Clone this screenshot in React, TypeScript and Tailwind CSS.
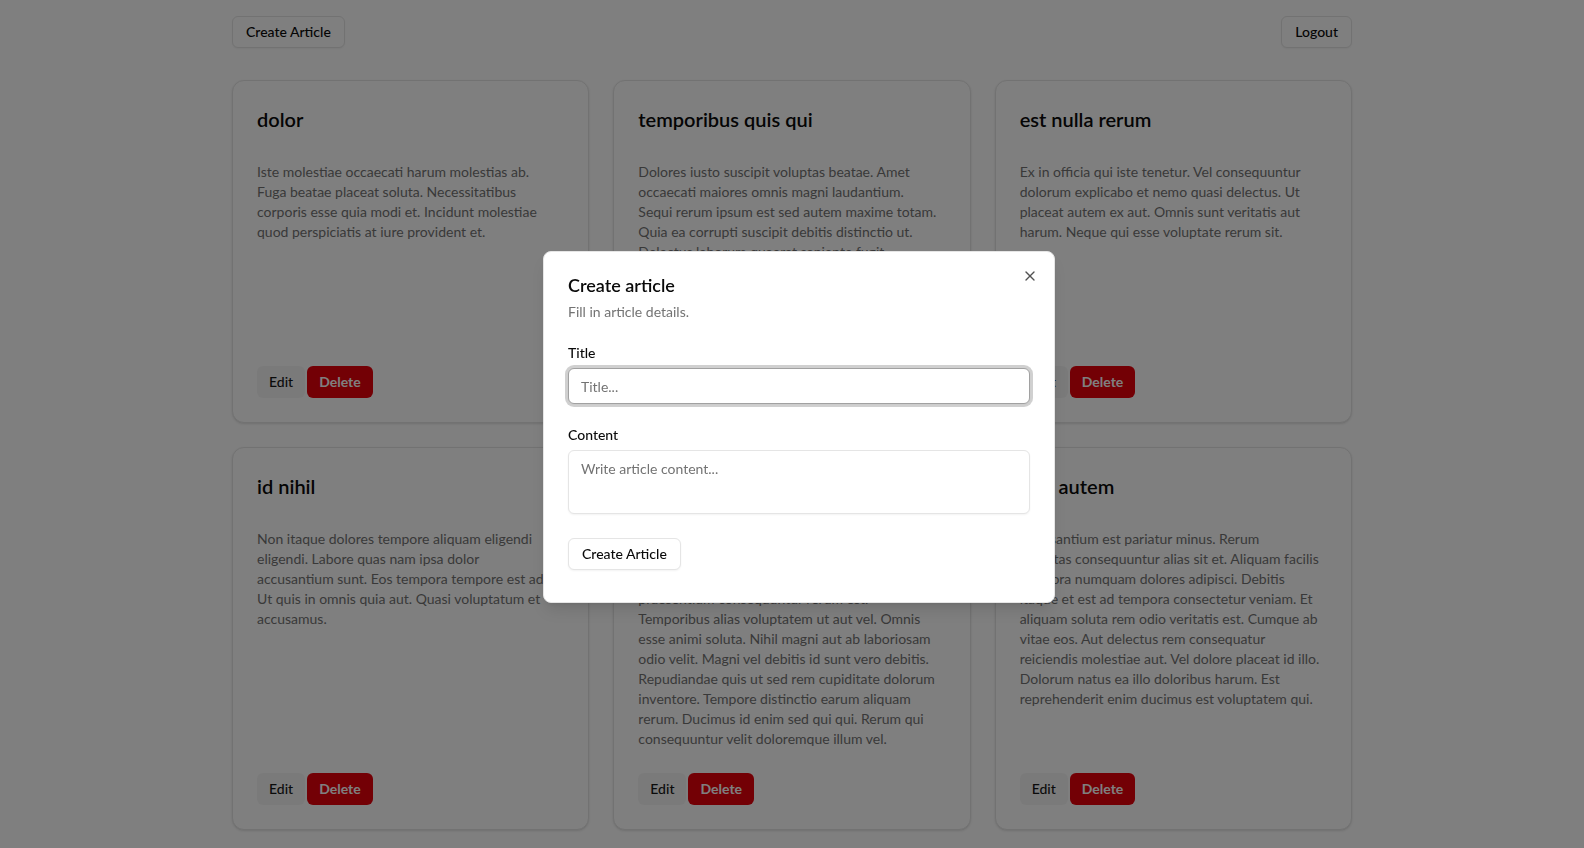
import React from "react";
import { X } from "lucide-react";

type Article = { title: string; lines: string[] };

const articles: Article[] = [
  {
    title: "dolor",
    lines: [
      "Iste molestiae occaecati harum molestias ab.",
      "Fuga beatae placeat soluta. Necessitatibus",
      "corporis esse quia modi et. Incidunt molestiae",
      "quod perspiciatis at iure provident et.",
    ],
  },
  {
    title: "temporibus quis qui",
    lines: [
      "Dolores iusto suscipit voluptas beatae. Amet",
      "occaecati maiores omnis magni laudantium.",
      "Sequi rerum ipsum est sed autem maxime totam.",
      "Quia ea corrupti suscipit debitis distinctio ut.",
      "Delectus laborum quaerat sapiente fugit.",
      "Voluptatem dolorem et quos neque. Ut rerum",
      "eveniet vero perferendis. Qui odit eius quia",
      "nihil explicabo. Accusamus sed dolorem omnis",
      "molestiae aut et voluptas.",
    ],
  },
  {
    title: "est nulla rerum",
    lines: [
      "Ex in officia qui iste tenetur. Vel consequuntur",
      "dolorum explicabo et nemo quasi delectus. Ut",
      "placeat autem ex aut. Omnis sunt veritatis aut",
      "harum. Neque qui esse voluptate rerum sit.",
    ],
  },
  {
    title: "id nihil",
    lines: [
      "Non itaque dolores tempore aliquam eligendi",
      "eligendi. Labore quas nam ipsa dolor",
      "accusantium sunt. Eos tempora tempore est ad.",
      "Ut quis in omnis quia aut. Quasi voluptatum et",
      "accusamus.",
    ],
  },
  {
    title: "quia voluptas",
    lines: [
      "Sint eum dolorem quia voluptas dolores. Est",
      "quos nulla ipsam. Consequatur minima sunt",
      "nihil officiis. Quod amet dolore quia. Et",
      "praesentium consequuntur rerum est.",
      "Temporibus alias voluptatem ut aut vel. Omnis",
      "esse animi soluta. Nihil magni aut ab laboriosam",
      "odio velit. Magni vel debitis id sunt vero debitis.",
      "Repudiandae quis ut sed rem cupiditate dolorum",
      "inventore. Tempore distinctio earum aliquam",
      "rerum. Ducimus id enim sed qui qui. Rerum qui",
      "consequuntur velit doloremque illum vel.",
    ],
  },
  {
    title: "non autem",
    lines: [
      "Accusantium est pariatur minus. Rerum",
      "voluptas consequuntur alias sit et. Aliquam facilis",
      "tempora numquam dolores adipisci. Debitis",
      "itaque et est ad tempora consectetur veniam. Et",
      "aliquam soluta rem odio veritatis est. Cumque ab",
      "vitae eos. Aut delectus rem consequatur",
      "reiciendis molestiae aut. Vel dolore placeat id illo.",
      "Dolorum natus ea illo doloribus harum. Est",
      "reprehenderit enim ducimus est voluptatem qui.",
    ],
  },
];

function OutlineButton({ children }: { children: React.ReactNode }) {
  return (
    <button className="inline-flex h-8 items-center justify-center rounded-md border border-[#e5e5e5] bg-white px-[13px] text-sm font-medium text-[#0a0a0a] shadow-xs">
      {children}
    </button>
  );
}

function ArticleCard({ a }: { a: Article }) {
  return (
    <div className="flex flex-col rounded-xl border border-[#e5e5e5] bg-white py-6 text-[#0a0a0a] shadow-sm">
      <div className="px-6">
        <h2 className="text-xl leading-7 font-semibold">{a.title}</h2>
      </div>
      <div className="mt-[29px] flex-1 px-6 text-sm leading-5 text-[#737373]">
        {a.lines.map((l, i) => (
          <span key={i} className="block whitespace-nowrap">
            {l}
          </span>
        ))}
      </div>
      <div className="mt-6 flex items-center gap-0.5 px-6">
        <button className="inline-flex h-8 items-center rounded-md bg-[#f5f5f5] px-3 text-sm font-medium text-[#171717]">
          Edit
        </button>
        <button className="inline-flex h-8 items-center rounded-md bg-[#e7000b] px-3 text-sm font-bold text-white">
          Delete
        </button>
      </div>
    </div>
  );
}

export default function App() {
  return (
    <div className="relative min-h-screen bg-white font-['Lato',sans-serif] text-[#0a0a0a]">
      <div className="mx-auto max-w-6xl px-4 pt-4 pb-8">
        <div className="flex items-center justify-between">
          <OutlineButton>Create Article</OutlineButton>
          <OutlineButton>Logout</OutlineButton>
        </div>
        <div className="mt-8 grid grid-cols-3 gap-6">
          {articles.map((a) => (
            <ArticleCard key={a.title} a={a} />
          ))}
        </div>
      </div>

      <div className="fixed inset-0 z-40 bg-black/50" />

      <div className="fixed top-[251px] left-[543px] z-50 w-[512px] rounded-lg border border-[#e5e5e5] bg-white p-6 pb-8 shadow-lg">
        <div className="flex flex-col gap-2">
          <h2 className="text-lg leading-none font-semibold">Create article</h2>
          <p className="text-sm leading-5 text-[#737373]">Fill in article details.</p>
        </div>
        <div className="mt-6 flex flex-col">
          <label className="text-sm leading-none font-medium">Title</label>
          <input
            className="mt-2 h-9 w-full rounded-md border border-[#a1a1a1] bg-white px-3 text-sm shadow-xs ring-[3px] ring-[#a1a1a1]/50 outline-none placeholder:text-[#737373]"
            placeholder="Title..."
          />
          <label className="mt-6 text-sm leading-none font-medium">Content</label>
          <textarea
            className="mt-2 h-16 w-full resize-none rounded-md border border-[#e5e5e5] bg-white px-3 py-2 text-sm leading-5 shadow-xs outline-none placeholder:text-[#737373]"
            placeholder="Write article content..."
          />
          <div className="mt-6">
            <OutlineButton>Create Article</OutlineButton>
          </div>
        </div>
        <button className="absolute top-4 right-4 rounded-xs opacity-70">
          <X className="size-4" />
        </button>
      </div>
    </div>
  );
}
